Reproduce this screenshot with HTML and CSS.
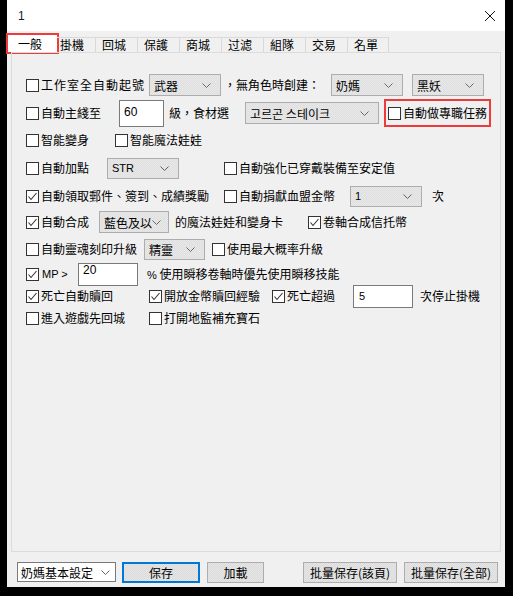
FILE: index.html
```html
<!DOCTYPE html>
<html lang="zh-Hant">
<head>
<meta charset="utf-8">
<title>1</title>
<link rel="stylesheet" href="styles.css">
</head>
<body>
<div class="window">
  <div class="titlebar">
    <span class="title">1</span>
    <svg class="close" width="12" height="12" viewBox="0 0 12 12"><path d="M1 1L11 11M11 1L1 11" stroke="#111" stroke-width="1" fill="none"/></svg>
  </div>

  <div class="tabs">
    <div class="tab active">一般</div>
    <div class="tab second">掛機</div>
    <div class="tab">回城</div>
    <div class="tab">保護</div>
    <div class="tab">商城</div>
    <div class="tab">过滤</div>
    <div class="tab">組隊</div>
    <div class="tab">交易</div>
    <div class="tab last">名單</div>
  </div>

  <div class="panel">
    <div class="row r1">
      <span class="box"></span><span class="txt spaced">工作室全自動起號</span>
      <div class="select w72 m-r1a"><span>武器</span><svg class="chev" width="9" height="5" viewBox="0 0 9 5"><polyline points="0.5,0.5 4.5,4.5 8.5,0.5" fill="none" stroke="#666"/></svg></div>
      <span class="txt m-r1b">，無角色時創建：</span>
      <div class="select w72 m-r1c"><span>奶媽</span><svg class="chev" width="9" height="5" viewBox="0 0 9 5"><polyline points="0.5,0.5 4.5,4.5 8.5,0.5" fill="none" stroke="#666"/></svg></div>
      <div class="select w72 m-r1d"><span>黑妖</span><svg class="chev" width="9" height="5" viewBox="0 0 9 5"><polyline points="0.5,0.5 4.5,4.5 8.5,0.5" fill="none" stroke="#666"/></svg></div>
    </div>

    <div class="row r2">
      <span class="box"></span><span class="txt">自動主綫至</span>
      <div class="input in60">60</div>
      <span class="txt m-r2b">級，食材選</span>
      <div class="select wkr m-r2c"><span class="kr">고르곤 스테이크</span><svg class="chev" width="9" height="5" viewBox="0 0 9 5"><polyline points="0.5,0.5 4.5,4.5 8.5,0.5" fill="none" stroke="#666"/></svg></div>
      <div class="redbox">
        <span class="box"></span><span class="txt">自動做專職任務</span>
      </div>
    </div>

    <div class="row r3">
      <span class="box"></span><span class="txt">智能變身</span>
      <span class="box m-r3b"></span><span class="txt">智能魔法娃娃</span>
    </div>

    <div class="row r4">
      <span class="box"></span><span class="txt">自動加點</span>
      <div class="select w72 h21 m-r4b"><span class="lat">STR</span><svg class="chev" width="9" height="5" viewBox="0 0 9 5"><polyline points="0.5,0.5 4.5,4.5 8.5,0.5" fill="none" stroke="#666"/></svg></div>
      <span class="box m-r4c"></span><span class="txt">自動強化已穿戴裝備至安定值</span>
    </div>

    <div class="row r5">
      <span class="box"><svg width="11" height="11" viewBox="0 0 11 11"><polyline points="1.5,5.5 4,8.5 9.5,2" fill="none" stroke="#333" stroke-width="1.1"/></svg></span><span class="txt">自動領取郵件、簽到、成績獎勵</span>
      <span class="box m-r5b"></span><span class="txt">自動捐獻血盟金幣</span>
      <div class="select w72 h21 m-r5c"><span class="lat">1</span><svg class="chev" width="9" height="5" viewBox="0 0 9 5"><polyline points="0.5,0.5 4.5,4.5 8.5,0.5" fill="none" stroke="#666"/></svg></div>
      <span class="txt m-r5d">次</span>
    </div>

    <div class="row r6">
      <span class="box"><svg width="11" height="11" viewBox="0 0 11 11"><polyline points="1.5,5.5 4,8.5 9.5,2" fill="none" stroke="#333" stroke-width="1.1"/></svg></span><span class="txt">自動合成</span>
      <div class="select w70 m-r6b"><span>藍色及以</span><svg class="chev" width="9" height="5" viewBox="0 0 9 5"><polyline points="0.5,0.5 4.5,4.5 8.5,0.5" fill="none" stroke="#666"/></svg></div>
      <span class="txt m-r6c">的魔法娃娃和變身卡</span>
      <span class="box m-r6d"><svg width="11" height="11" viewBox="0 0 11 11"><polyline points="1.5,5.5 4,8.5 9.5,2" fill="none" stroke="#333" stroke-width="1.1"/></svg></span><span class="txt">卷軸合成信托幣</span>
    </div>

    <div class="row r7">
      <span class="box"></span><span class="txt">自動靈魂刻印升級</span>
      <div class="select w61 h21 m-r7b"><span>精靈</span><svg class="chev" width="9" height="5" viewBox="0 0 9 5"><polyline points="0.5,0.5 4.5,4.5 8.5,0.5" fill="none" stroke="#666"/></svg></div>
      <span class="box m-r7c"></span><span class="txt">使用最大概率升級</span>
    </div>

    <div class="row r8">
      <span class="box"><svg width="11" height="11" viewBox="0 0 11 11"><polyline points="1.5,5.5 4,8.5 9.5,2" fill="none" stroke="#333" stroke-width="1.1"/></svg></span><span class="lat mp">MP &gt;</span>
      <div class="input in20">20</div>
      <span class="txt m-r8c"><span class="lat">%</span> 使用瞬移卷軸時優先使用瞬移技能</span>
    </div>

    <div class="row r9">
      <span class="box"><svg width="11" height="11" viewBox="0 0 11 11"><polyline points="1.5,5.5 4,8.5 9.5,2" fill="none" stroke="#333" stroke-width="1.1"/></svg></span><span class="txt">死亡自動贖回</span>
      <span class="box m-r9b"><svg width="11" height="11" viewBox="0 0 11 11"><polyline points="1.5,5.5 4,8.5 9.5,2" fill="none" stroke="#333" stroke-width="1.1"/></svg></span><span class="txt">開放金幣贖回經驗</span>
      <span class="box m-r9c"><svg width="11" height="11" viewBox="0 0 11 11"><polyline points="1.5,5.5 4,8.5 9.5,2" fill="none" stroke="#333" stroke-width="1.1"/></svg></span><span class="txt">死亡超過</span>
      <div class="input in5 m-r9d">5</div>
      <span class="txt m-r9e">次停止掛機</span>
    </div>

    <div class="row r10">
      <span class="box"></span><span class="txt">進入遊戲先回城</span>
      <span class="box m-r10b"></span><span class="txt">打開地監補充寶石</span>
    </div>
  </div>

  <div class="footer">
    <div class="preset"><span>奶媽基本設定</span><svg class="chev" width="9" height="5" viewBox="0 0 9 5"><polyline points="0.5,0.5 4.5,4.5 8.5,0.5" fill="none" stroke="#666"/></svg></div>
    <div class="btn save">保存</div>
    <div class="btn load">加載</div>
    <div class="btn batch b1">批量保存(該頁)</div>
    <div class="btn batch b2">批量保存(全部)</div>
  </div>
</div>
</body>
</html>
```

FILE: styles.css
```css
* { box-sizing: border-box; }
html, body { margin: 0; padding: 0; }
body {
  background: #000;
  width: 513px;
  height: 596px;
  overflow: hidden;
  font-family: "Noto Sans CJK TC", "Noto Sans CJK SC", sans-serif;
  font-size: 12px;
  color: #000;
}
.window {
  margin-left: 7px;
  width: 498px;
  height: 587px;
  background: #f0f0f0;
  display: flex;
  flex-direction: column;
}
.titlebar {
  height: 31px;
  flex: none;
  background: #fff;
  display: flex;
  align-items: center;
  justify-content: space-between;
  padding: 0 9px 0 11px;
}
.title {
  font-family: "Liberation Sans", sans-serif;
  font-size: 12px;
  color: #1a1a1a;
}
.close { display: block; }

/* tabs */
.tabs {
  height: 21px;
  flex: none;
  display: flex;
  align-items: flex-end;
  padding-left: 1px;
}
.tab {
  height: 15px;
  width: 42px;
  flex: none;
  border-left: 1px solid #d9d9d9;
  border-top: 1px solid #d9d9d9;
  padding-left: 6px;
  font-size: 12px;
  line-height: 13px;
  white-space: nowrap;
}
.tab.active {
  width: 49px;
  height: 17px;
  background: #fff;
  border: none;
  padding-left: 10px;
  padding-top: 1px;
  line-height: 15px;
  outline: 2px solid #ee3a3a;
}
.tab.second { width: 38px; border-left: none; padding-left: 3px; }
.tab.last { border-right: 1px solid #d9d9d9; width: 42px; }

/* panel */
.panel {
  margin: 0 4px;
  height: 500px;
  flex: none;
  border: 1px solid #dcdcdc;
  padding: 18px 0 0 14px;
}
.row {
  display: flex;
  align-items: center;
  white-space: nowrap;
}
.r1 { height: 28px; }
.r2 { height: 28px; }
.r3 { height: 26px; }
.r4 { height: 30px; }
.r5 { height: 26px; }
.r6 { height: 26px; }
.r7 { height: 28px; }
.r8 { height: 22px; }
.r9 { height: 22px; }
.r10 { height: 22px; }

.box {
  width: 13px;
  height: 13px;
  flex: none;
  border: 1px solid #333;
  background: #fff;
  margin-right: 2px;
  display: flex;
  align-items: center;
  justify-content: center;
}
.box svg { display: block; }
.txt { flex: none; line-height: 16px; }
.spaced { letter-spacing: 1px; }
.lat {
  font-family: "Liberation Sans", sans-serif;
  font-size: 11px;
}
.mp { width: 37px; flex: none; padding-left: 1px; }

.select {
  flex: none;
  height: 22px;
  border: 1px solid #adadad;
  background: repeating-conic-gradient(#e9e9e9 0 25%, #dedede 0 50%) 0 0 / 2px 2px;
  display: flex;
  align-items: center;
  justify-content: space-between;
  padding: 0 9px 0 4px;
}
.select .chev { display: block; flex: none; }
.w72 { width: 72px; }
.w70 { width: 70px; }
.w61 { width: 61px; }
.wkr { width: 134px; }
.h21 { height: 21px; }
.kr { font-family: "Noto Sans CJK KR", sans-serif; font-size: 12px; }

.input {
  flex: none;
  background: #fff;
  border: 1px solid #7a7a7a;
  font-family: "Liberation Sans", sans-serif;
  font-size: 12px;
  padding-left: 4px;
}
.in60 { width: 45px; height: 27px; margin-left: 18px; padding-top: 4px; line-height: 14px; }
.in20 { width: 60px; height: 23px; padding-top: 0; line-height: 12px; }
.in5 { width: 60px; height: 23px; line-height: 21px; font-size: 11px; padding-left: 5px; }

.redbox {
  flex: none;
  margin-left: 5px;
  width: 107px;
  height: 28px;
  border: 2px solid #ee3a3a;
  padding-left: 2px;
  display: flex;
  align-items: center;
}

/* horizontal offsets */
.m-r1a { margin-left: 4px; }
.m-r1b { margin-left: 3px; }
.m-r1c { margin-left: 11px; }
.m-r1d { margin-left: 9px; }
.m-r2b { margin-left: 5px; }
.m-r2c { margin-left: 16px; }
.m-r3b { margin-left: 26px; }
.m-r4b { margin-left: 18px; }
.m-r4c { margin-left: 45px; }
.m-r5b { margin-left: 15px; }
.m-r5c { margin-left: 15px; }
.m-r5d { margin-left: 10px; }
.m-r6b { margin-left: 10px; }
.m-r6c { margin-left: 6px; }
.m-r6d { margin-left: 25px; }
.m-r7b { margin-left: 7px; }
.m-r7c { margin-left: 7px; }
.m-r8c { margin-left: 9px; }
.m-r9b { margin-left: 36px; }
.m-r9c { margin-left: 12px; }
.m-r9d { margin-left: 18px; }
.m-r9e { margin-left: 7px; }
.m-r10b { margin-left: 24px; }

/* footer */
.footer {
  flex: none;
  display: flex;
  align-items: flex-start;
  padding: 10px 0 0 10px;
}
.preset {
  flex: none;
  width: 99px;
  height: 20px;
  background: #fff;
  border: 1px solid #7a7a7a;
  display: flex;
  align-items: center;
  justify-content: space-between;
  padding: 0 5px 0 3px;
  font-size: 12px;
}
.preset .chev { display: block; }
.btn {
  flex: none;
  height: 21px;
  border: 1px solid #adadad;
  background: repeating-conic-gradient(#e6e6e6 0 25%, #dbdbdb 0 50%) 0 0 / 2px 2px;
  display: flex;
  align-items: center;
  justify-content: center;
  font-size: 12px;
  white-space: nowrap;
}
.save { width: 78px; margin-left: 6px; border: 2px solid #0078d7; }
.load { width: 57px; margin-left: 7px; }
.batch { width: 94px; }
.b1 { margin-left: 39px; }
.b2 { margin-left: 7px; }
```
